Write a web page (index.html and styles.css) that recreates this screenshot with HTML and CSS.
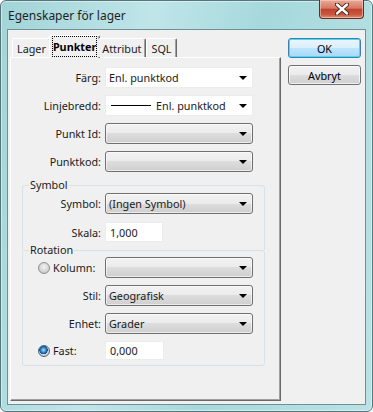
FILE: index.html
```html
<!DOCTYPE html>
<html lang="sv">
<head>
  <meta charset="UTF-8">
  <meta name="viewport" content="width=device-width, initial-scale=1.0">
  <title>Egenskaper för lager</title>
  <link rel="stylesheet" href="styles.css">
</head>
<body>
  <div class="window">
    <div class="titlebar">
      <span class="title">Egenskaper för lager</span>
      <button class="close-btn" aria-label="Stäng">
        <svg width="14" height="12" viewBox="0 0 14 12">
          <path d="M2 1.5 L12 10.5 M12 1.5 L2 10.5" stroke="#3b1a14" stroke-width="4.2" stroke-linecap="round"/>
          <path d="M2 1.5 L12 10.5 M12 1.5 L2 10.5" stroke="#ffffff" stroke-width="2.4" stroke-linecap="round"/>
        </svg>
      </button>
    </div>

    <div class="client">
      <div class="tabs-area">
        <div class="tab-row">
          <div class="tab">Lager</div>
          <div class="tab active"><span class="focus">Punkter</span></div>
          <div class="tab">Attribut</div>
          <div class="tab">SQL</div>
        </div>

        <div class="tab-panel">
          <div class="form-grid">
            <label>Färg:</label>
            <div class="combo flat"><span>Enl. punktkod</span><i class="arrow"></i></div>

            <label>Linjebredd:</label>
            <div class="combo flat">
              <span class="line-sample"><i class="line"></i>Enl. punktkod</span><i class="arrow"></i>
            </div>

            <label>Punkt Id:</label>
            <div class="combo"><span></span><i class="arrow"></i></div>

            <label>Punktkod:</label>
            <div class="combo"><span></span><i class="arrow"></i></div>
          </div>

          <fieldset class="group symbol-group">
            <legend>Symbol</legend>
            <div class="form-grid inset">
              <label>Symbol:</label>
              <div class="combo"><span>(Ingen Symbol)</span><i class="arrow"></i></div>

              <label>Skala:</label>
              <input class="textbox" type="text" value="1,000">
            </div>
          </fieldset>

          <fieldset class="group rotation-group">
            <legend>Rotation</legend>
            <div class="form-grid inset">
              <label class="radio-label"><i class="radio"></i>Kolumn:</label>
              <div class="combo"><span></span><i class="arrow"></i></div>

              <label>Stil:</label>
              <div class="combo"><span>Geografisk</span><i class="arrow"></i></div>

              <label>Enhet:</label>
              <div class="combo"><span>Grader</span><i class="arrow"></i></div>

              <label class="radio-label"><i class="radio checked"></i>Fast:</label>
              <input class="textbox short" type="text" value="0,000">
            </div>
          </fieldset>
        </div>
      </div>

      <div class="side-buttons">
        <button class="btn default">OK</button>
        <button class="btn">Avbryt</button>
      </div>
    </div>
  </div>
</body>
</html>
```

FILE: styles.css
```css
:root {
  --face: #f0f0f0;
  --shadow: #a0a0a0;
  --dark-shadow: #696969;
  --group-line: #d9e1e6;
  --frame-border: #56767c;
  --text: #1a1a1a;
}

* {
  box-sizing: border-box;
}

body {
  margin: 0;
  background-color: #ffffff;
  font-family: "Noto Sans", "Liberation Sans", Arial, sans-serif;
  font-size: 10.8px;
  color: var(--text);
}

.window {
  width: 373px;
  height: 412px;
  display: flex;
  flex-direction: column;
  border: 1px solid var(--frame-border);
  border-radius: 6px;
  background: linear-gradient(100deg, #a2d4d8 0%, #bfe5e9 35%, #a6d9dc 60%, #b9e2e5 100%);
  box-shadow: inset 0 0 0 1px rgba(255, 255, 255, 0.45);
}

.titlebar {
  height: 28px;
  display: flex;
  align-items: flex-start;
  justify-content: space-between;
}

.title {
  padding: 6px 0 0 7px;
  font-size: 12px;
  color: #1e1e1e;
}

.close-btn {
  width: 45px;
  height: 19px;
  margin: -1px 8px 0 0;
  padding: 0;
  display: flex;
  align-items: center;
  justify-content: center;
  border: 1px solid #6a2b20;
  border-top: none;
  border-radius: 0 0 4px 4px;
  background: linear-gradient(#e9a897 0%, #d67b66 45%, #c2432c 52%, #c9563f 80%, #dc927c 100%);
  box-shadow: inset 0 0 0 1px rgba(255, 220, 210, 0.5);
}

.client {
  flex: 1;
  display: flex;
  margin: 0 6px 6px 6px;
  padding: 0 4px 3px 2px;
  border: 1px solid #6f9196;
  background-color: var(--face);
}

/* flikar */
.tabs-area {
  width: 271px;
  display: flex;
  flex-direction: column;
  padding-top: 5px;
}

.tab-row {
  height: 22px;
  display: flex;
  align-items: flex-end;
  padding-left: 2px;
  position: relative;
  z-index: 1;
}

.tab {
  height: 19px;
  padding: 0 4px;
  display: flex;
  align-items: center;
  border-top: 1px solid #ffffff;
  border-left: 1px solid #ffffff;
  border-right: 1px solid var(--dark-shadow);
  border-radius: 2px 2px 0 0;
  background-color: var(--face);
  box-shadow: inset -1px 0 0 var(--shadow);
}

.tab.active {
  height: 23px;
  margin: 0 -2px -1px -2px;
  padding: 0 3px 2px 3px;
  font-weight: bold;
  color: #000000;
}

.tab.active + .tab {
  border-left: none;
}

.focus {
  padding: 2px 0;
  outline: 1px dotted #000000;
  outline-offset: 0;
  line-height: 15px;
}

.tab-panel {
  flex: 1;
  padding-top: 9px;
  border-top: 1px solid #ffffff;
  border-left: 1px solid #ffffff;
  border-right: 1px solid var(--dark-shadow);
  border-bottom: 1px solid var(--dark-shadow);
  box-shadow: inset -1px -1px 0 var(--shadow);
}

/* formulär */
.form-grid {
  display: grid;
  grid-template-columns: 90px 148px;
  column-gap: 4px;
  row-gap: 7px;
  align-items: center;
}

.form-grid.inset {
  grid-template-columns: 78px 148px;
}

.form-grid label {
  text-align: right;
}

.radio-label {
  display: flex;
  align-items: center;
  gap: 3px;
  padding-left: 15px;
}

.combo {
  height: 21px;
  display: flex;
  align-items: center;
  justify-content: space-between;
  padding: 0 5px 0 3px;
  border: 1px solid #707070;
  border-radius: 3px;
  background: linear-gradient(#f2f2f2 0%, #ebebeb 50%, #dddddd 50%, #cfcfcf 100%);
  box-shadow: inset 0 0 0 1px rgba(255, 255, 255, 0.6);
}

.combo.flat {
  border: 1px solid #ececec;
  border-radius: 0;
  background: #ffffff;
  box-shadow: none;
}

.line-sample {
  display: flex;
  align-items: center;
}

.line {
  width: 40px;
  height: 1px;
  margin: 0 5px 0 2px;
  background-color: #000000;
}

.arrow {
  width: 0;
  height: 0;
  border-left: 4px solid transparent;
  border-right: 4px solid transparent;
  border-top: 4px solid #000000;
}

.textbox {
  width: 58px;
  height: 20px;
  margin: 0;
  padding: 0 4px;
  border: 1px solid #ececec;
  background-color: #ffffff;
  font: inherit;
  color: var(--text);
}

.textbox.short {
  height: 19px;
  width: 59px;
}

.radio {
  width: 12px;
  height: 12px;
  border: 1px solid #8e9090;
  border-radius: 50%;
  background: radial-gradient(circle at 50% 40%, #f4f4f4 0%, #d6d6d6 55%, #b9b9b9 100%);
}

.radio.checked {
  border-color: #3e6a8c;
  background:
    radial-gradient(circle at 45% 40%, #b9e0fb 0%, #3d8ccc 28%, #0d4f86 50%, transparent 54%),
    radial-gradient(circle at 50% 40%, #f4f4f4 0%, #d6d6d6 60%, #b9b9b9 100%);
}

/* grupper */
.group {
  width: 243px;
  margin: 0 0 0 11px;
  padding: 0 11px 0 0;
  border: 1px solid var(--group-line);
  border-radius: 3px;
  min-width: 0;
}

.group legend {
  margin-left: 6px;
  padding: 0 1px;
  line-height: 14px;
}

.symbol-group {
  margin-top: 6px;
  padding-top: 1px;
  padding-bottom: 8px;
  border-bottom: none;
  border-radius: 3px 3px 0 0;
}

.symbol-group .form-grid {
  row-gap: 8px;
}

.rotation-group {
  margin-top: -7px;
  padding-bottom: 5px;
}

/* knappar */
.side-buttons {
  width: 73px;
  margin: 8px 0 0 7px;
  display: flex;
  flex-direction: column;
  gap: 7px;
}

.btn {
  height: 20px;
  padding: 0;
  border: 1px solid #707070;
  border-radius: 3px;
  background: linear-gradient(#f2f2f2 0%, #ebebeb 50%, #dddddd 50%, #cfcfcf 100%);
  box-shadow: inset 0 0 0 1px rgba(255, 255, 255, 0.7);
  font: inherit;
  color: #000000;
}

.btn.default {
  border-color: #3c7fb1;
  background: linear-gradient(#eaf6fd 0%, #d9f0fc 50%, #bee6fd 50%, #a7d9f5 100%);
  box-shadow: inset 0 0 0 1px #48d8fb;
}
```
